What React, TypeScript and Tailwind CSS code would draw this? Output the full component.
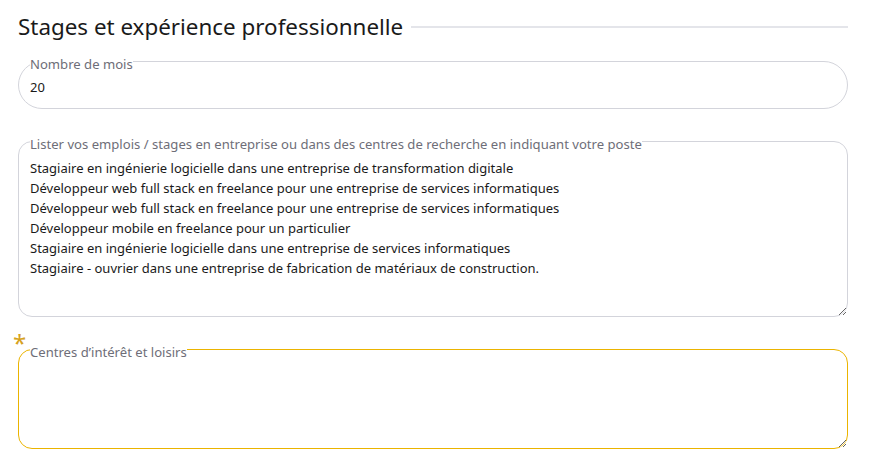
import { useState } from "react";

const font = { fontFamily: '"Noto Sans", "Open Sans", sans-serif' };

const legendCls = "pt-[6px] text-[13.1px] leading-[18px] text-[#6e6e78] px-0";

export default function App() {
  const [months, setMonths] = useState("20");
  const [jobs, setJobs] = useState(
    [
      "Stagiaire en ingénierie logicielle dans une entreprise de transformation digitale",
      "Développeur web full stack en freelance pour une entreprise de services informatiques",
      "Développeur web full stack en freelance pour une entreprise de services informatiques",
      "Développeur mobile en freelance pour un particulier",
      "Stagiaire en ingénierie logicielle dans une entreprise de services informatiques",
      "Stagiaire - ouvrier dans une entreprise de fabrication de matériaux de construction.",
    ].join("\n")
  );
  const [hobbies, setHobbies] = useState("");

  return (
    <div className="bg-white min-h-[468px] pl-[18px] pt-[12px]" style={font}>
      <div className="flex flex-col w-[830px]">
        {/* Section title */}
        <div className="flex items-center gap-[8px]">
          <h2 className="text-[22.4px] leading-[30px] text-[#1a1a1a] font-normal whitespace-nowrap">
            Stages et expérience professionnelle
          </h2>
          <div className="flex-1 h-[2px] bg-[#e4e5ea] mt-[-1px]" />
        </div>

        <div className="flex flex-col gap-[20px] pt-[7px]">
          {/* Nombre de mois */}
          <fieldset className="border border-[#d3d4db] rounded-[24px] px-[11px]">
            <legend className={legendCls}>Nombre de mois</legend>
            <input
              value={months}
              onChange={(e) => setMonths(e.target.value)}
              className="block w-full bg-transparent outline-none border-0 text-[13px] leading-[20px] text-[#1a1a1a] pt-[4px] pb-[11px]"
            />
          </fieldset>

          {/* Emplois / stages */}
          <fieldset className="border border-[#d3d4db] rounded-[14px] pl-[11px] pr-0">
            <legend className={legendCls}>
              Lister vos emplois / stages en entreprise ou dans des centres de recherche en indiquant votre poste
            </legend>
            <textarea
              value={jobs}
              onChange={(e) => setJobs(e.target.value)}
              className="block w-full h-[163px] bg-transparent outline-none border-0 resize-y text-[13px] leading-[20px] text-[#1a1a1a] pt-[5px]"
            />
          </fieldset>

          {/* Centres d'intérêt */}
          <div className="relative">
            <span className="absolute left-[-5px] top-[-6px] text-[24px] leading-[24px] text-[#d6a21e]">*</span>
            <fieldset className="border border-[#ebb400] rounded-[14px] pl-[11px] pr-0">
              <legend className={legendCls}>Centres d’intérêt et loisirs</legend>
              <textarea
                value={hobbies}
                onChange={(e) => setHobbies(e.target.value)}
                className="block w-full h-[87px] bg-transparent outline-none border-0 resize-y text-[13px] leading-[20px] text-[#1a1a1a] pt-[5px]"
              />
            </fieldset>
          </div>
        </div>
      </div>
    </div>
  );
}
